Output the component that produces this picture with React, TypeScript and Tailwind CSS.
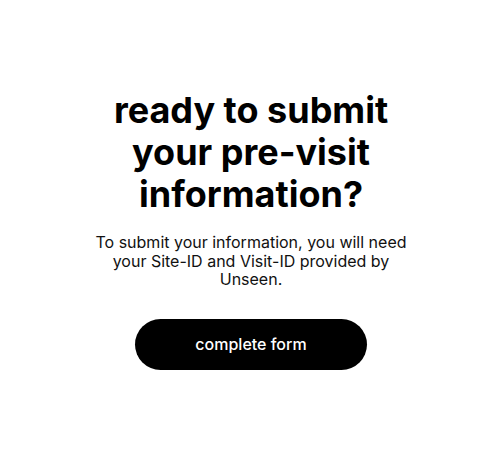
export default function App() {
  return (
    <div
      className="flex min-h-screen w-full flex-col items-center justify-center bg-white px-6 pt-[10px] text-center text-black"
      style={{ fontFamily: "Inter, 'Noto Sans', sans-serif" }}
    >
      <h1 className="max-w-[300px] text-[36px] font-bold leading-[42px]">
        ready to submit your pre-visit information?
      </h1>
      <p className="mt-[18px] max-w-[320px] text-[16px] leading-[18.5px] text-[#111]">
        To submit your information, you will need your Site-ID and Visit-ID provided by Unseen.
      </p>
      <button className="mt-[30px] h-[51px] w-[232px] rounded-full bg-black text-[16px] font-medium text-white">
        complete form
      </button>
    </div>
  );
}
